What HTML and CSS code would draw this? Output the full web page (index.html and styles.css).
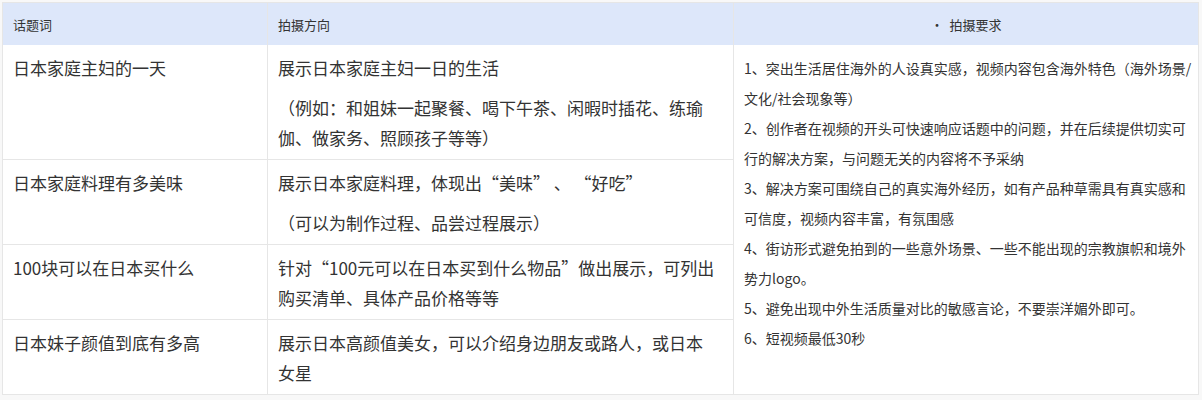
FILE: index.html
```html
<!DOCTYPE html>
<html lang="zh-CN">
<head>
<meta charset="utf-8">
<link rel="stylesheet" href="styles.css">
</head>
<body>
<table class="brief">
  <colgroup>
    <col class="c1"><col class="c2"><col class="c3">
  </colgroup>
  <thead>
    <tr>
      <th class="h">话题词</th>
      <th class="h">拍摄方向</th>
      <th class="h center">• &nbsp;拍摄要求</th>
    </tr>
  </thead>
  <tbody>
    <tr class="r1">
      <td class="big">日本家庭主妇的一天</td>
      <td class="big">
        <p>展示日本家庭主妇一日的生活</p>
        <p>（例如：和姐妹一起聚餐、喝下午茶、闲暇时插花、练瑜伽、做家务、照顾孩子等等）</p>
      </td>
      <td class="req" rowspan="4">
        <p>1、突出生活居住海外的人设真实感，视频内容包含海外特色（海外场景/文化/社会现象等）</p>
        <p>2、创作者在视频的开头可快速响应话题中的问题，并在后续提供切实可行的解决方案，与问题无关的内容将不予采纳</p>
        <p>3、解决方案可围绕自己的真实海外经历，如有产品种草需具有真实感和可信度，视频内容丰富，有氛围感</p>
        <p>4、街访形式避免拍到的一些意外场景、一些不能出现的宗教旗帜和境外势力logo。</p>
        <p>5、避免出现中外生活质量对比的敏感言论，不要崇洋媚外即可。</p>
        <p>6、短视频最低30秒</p>
      </td>
    </tr>
    <tr class="r2">
      <td class="big">日本家庭料理有多美味</td>
      <td class="big">
        <p>展示日本家庭料理，体现出“美味” 、 “好吃”</p>
        <p>（可以为制作过程、品尝过程展示）</p>
      </td>
    </tr>
    <tr class="r3">
      <td class="big">100块可以在日本买什么</td>
      <td class="big"><p>针对“100元可以在日本买到什么物品”做出展示，可列出购买清单、具体产品价格等等</p></td>
    </tr>
    <tr class="r4">
      <td class="big">日本妹子颜值到底有多高</td>
      <td class="big"><p>展示日本高颜值美女，可以介绍身边朋友或路人，或日本女星</p></td>
    </tr>
  </tbody>
</table>
</body>
</html>
```

FILE: styles.css
```css
html, body {
  margin: 0;
  padding: 0;
  background: #f8f8f8;
}
body {
  padding: 2px 0 0 2px;
  font-family: "Noto Sans CJK SC", "Microsoft YaHei", sans-serif;
  color: #333;
}
.brief {
  border-collapse: collapse;
  table-layout: fixed;
  width: 1196px;
  background: #fff;
  border: 1px solid #e6e6e6;
}
.c1 { width: 265px; }
.c2 { width: 466px; }
.c3 { width: 465px; }
.brief th, .brief td {
  border-left: 1px solid #e6e6e6;
  border-right: 1px solid #e6e6e6;
  vertical-align: top;
  text-align: left;
}
.brief th {
  background: #dde7fa;
  font-weight: normal;
  font-size: 13px;
  height: 42px;
  padding: 3px 10px 0 10px;
  vertical-align: middle;
  box-sizing: border-box;
  line-height: 20px;
}
.brief th.center { text-align: center; }
.brief tbody tr td.big {
  border-bottom: 1px solid #e6e6e6;
}
.big {
  font-size: 17px;
  line-height: 30px;
  padding: 8px 18px 6px 10px;
}
.big p { margin: 0; }
.big p + p { margin-top: 10px; }
.req {
  font-size: 14px;
  line-height: 30px;
  padding: 8px 4px 8px 10px;
}
.req p { margin: 0; }
.r1 .big { height: 100px; }
```
